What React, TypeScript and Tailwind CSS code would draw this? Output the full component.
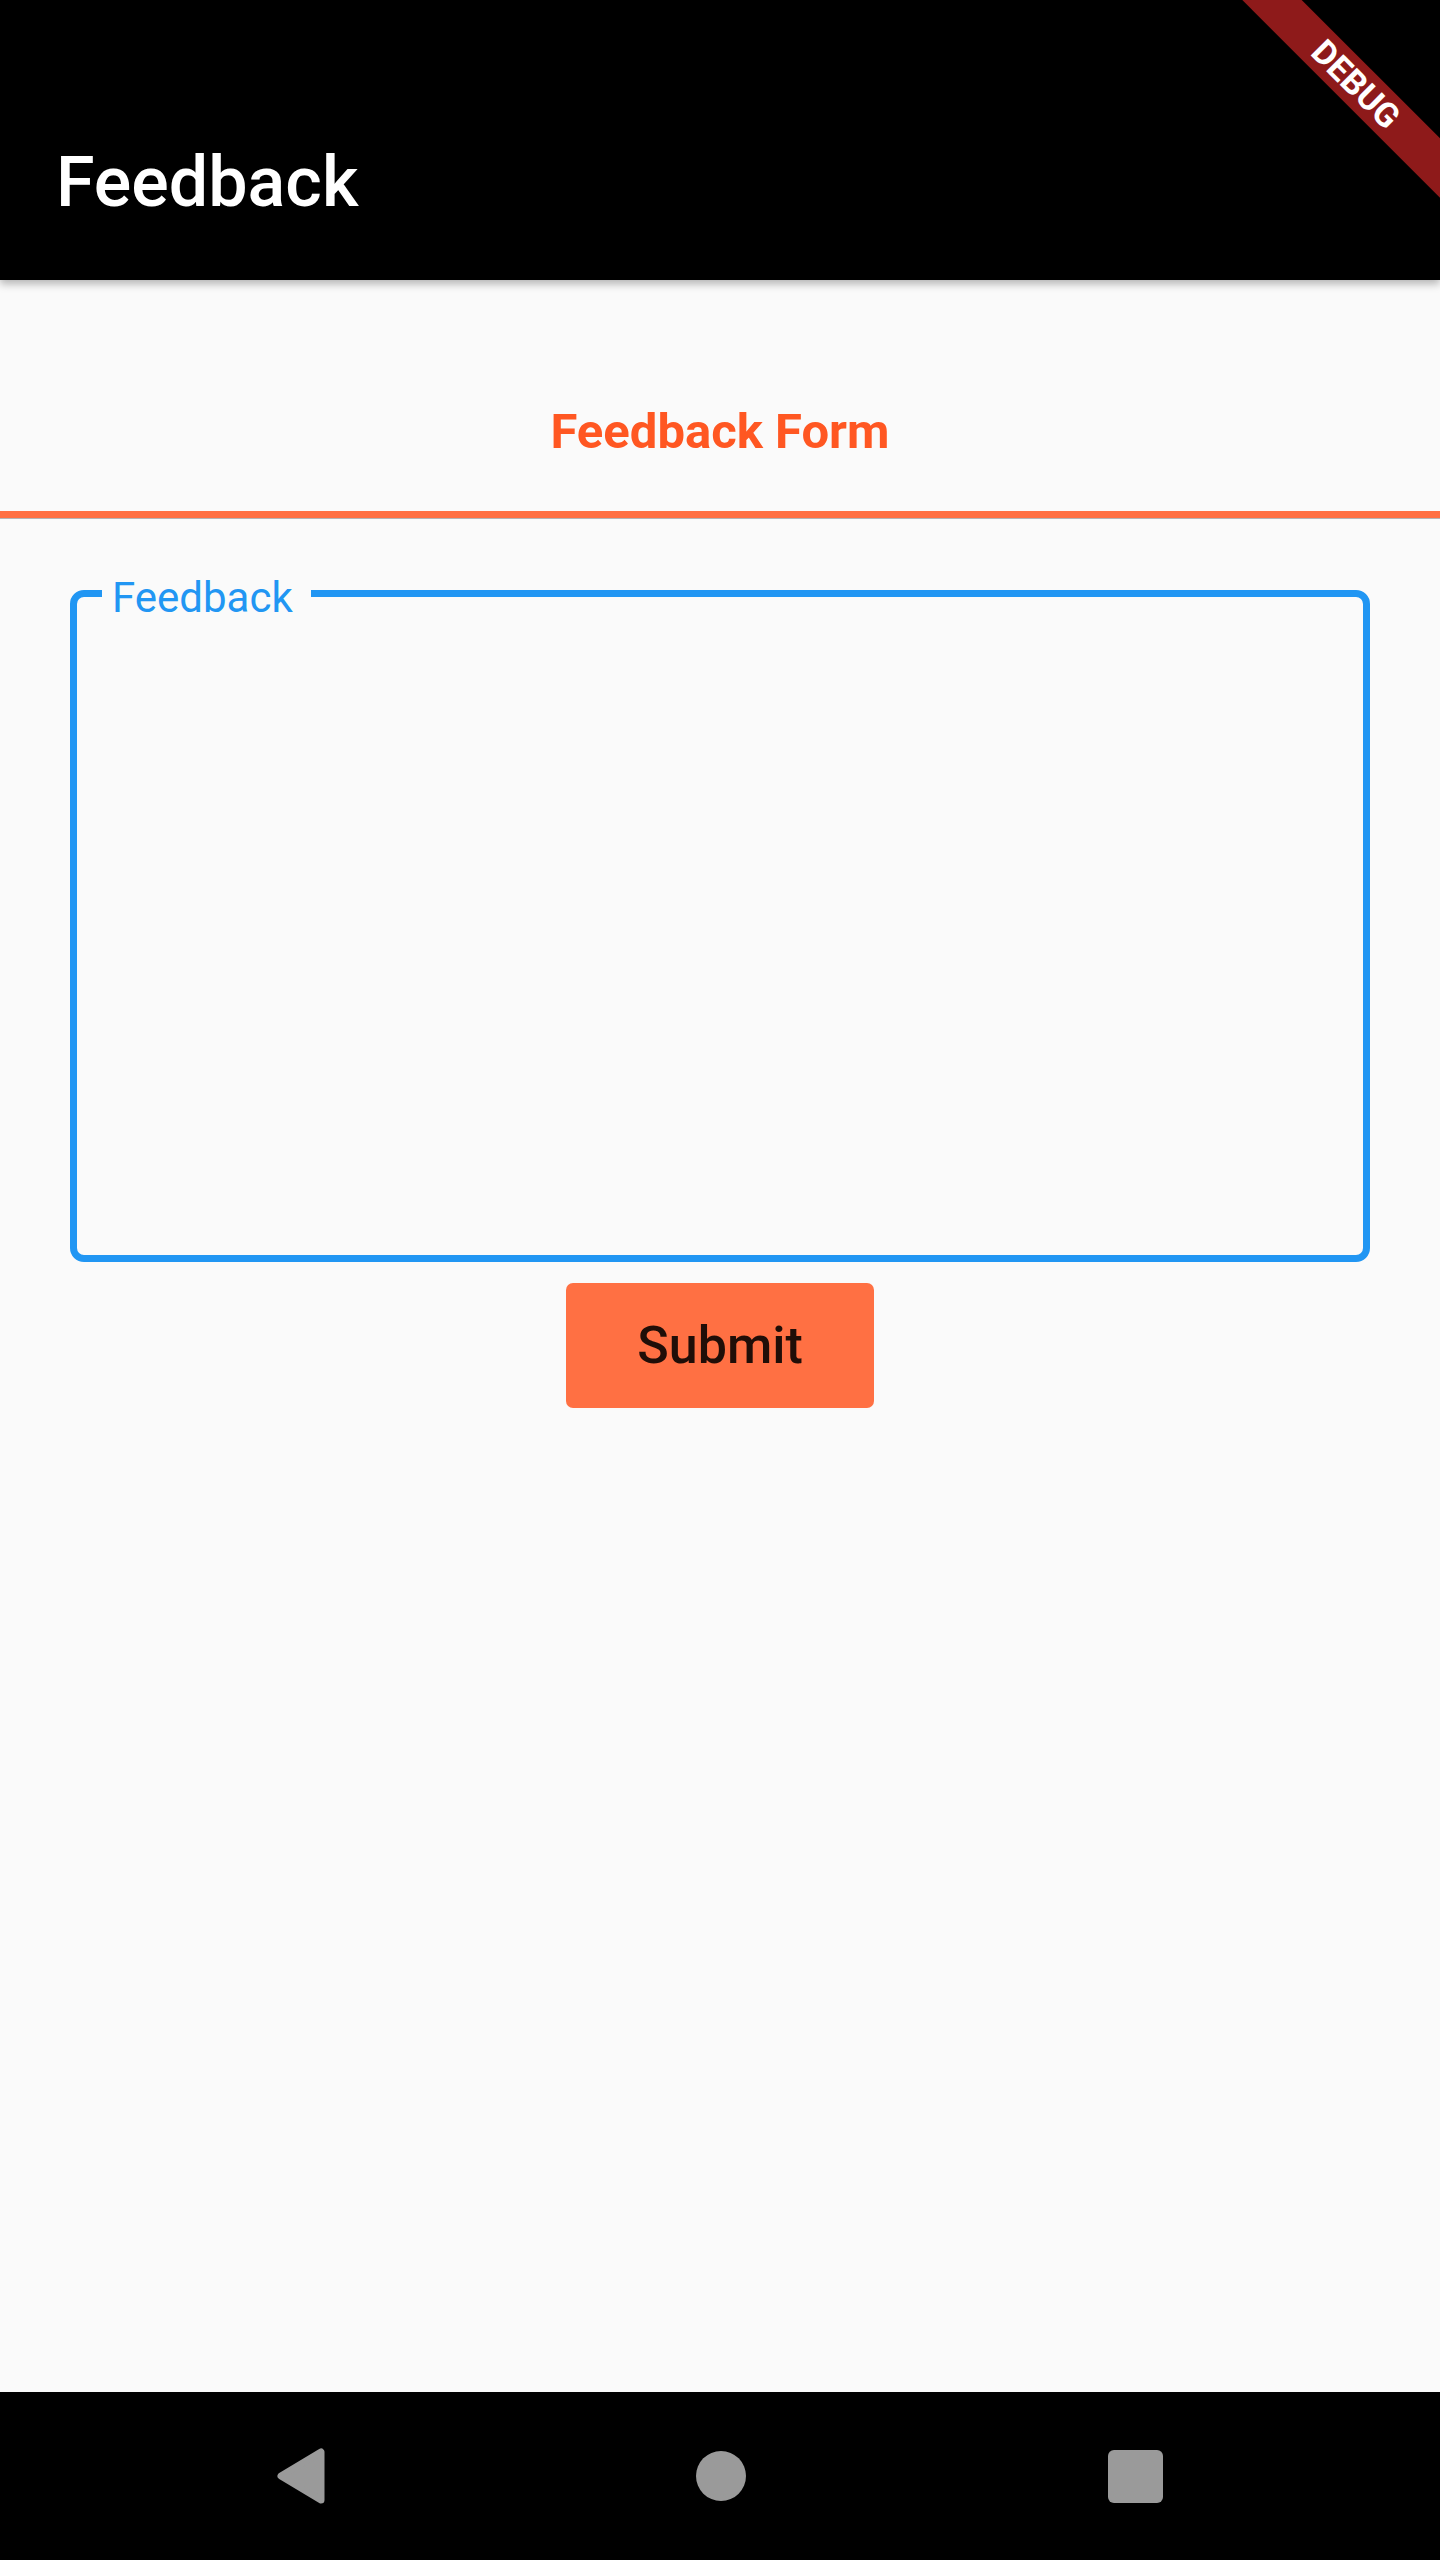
import React from 'react';

function NavBar() {
  return (
    <div className="h-[168px] bg-black flex items-center justify-center">
      {/* Back */}
      <svg width="48" height="56" viewBox="0 0 48 56">
        <polygon
          points="44,4 44,52 4,28"
          fill="#9a9a9a"
          stroke="#9a9a9a"
          strokeWidth="7"
          strokeLinejoin="round"
        />
      </svg>
      {/* Home */}
      <div className="ml-[371px] h-[50px] w-[50px] rounded-full bg-[#9a9a9a]" />
      {/* Recents */}
      <div className="ml-[362px] h-[53px] w-[55px] rounded-[6px] bg-[#9a9a9a]" />
    </div>
  );
}

export default function App() {
  return (
    <div className="relative min-h-[2560px] flex flex-col overflow-hidden bg-[#fafafa] font-['Roboto',sans-serif]">
      {/* App bar */}
      <header className="relative z-10 h-[280px] bg-black pt-[84px] shadow-[0_4px_8px_rgba(0,0,0,0.28)]">
        <div className="h-[196px] flex items-center px-[56px]">
          <h1 className="text-[70px] leading-[70px] font-medium text-white">Feedback</h1>
        </div>
      </header>

      {/* Debug banner */}
      <div className="absolute z-20 left-[1216px] top-[63px] w-[280px] h-[42px] rotate-45 bg-[#8e1a1a] shadow-[0_0_6px_rgba(0,0,0,0.5)] flex items-center justify-center">
        <span className="text-[34px] leading-[34px] font-bold text-white">DEBUG</span>
      </div>

      <main className="flex-1 flex flex-col">
        {/* Tab */}
        <div className="h-[231px] pt-[127px] flex justify-center">
          <span className="text-[49px] leading-[49px] font-bold text-[#ff5722]">Feedback Form</span>
        </div>
        <div className="h-[7px] bg-[#ff7043]" />
        <div className="h-px bg-[#b4b4b4]" />

        {/* Form */}
        <div className="px-[70px] pt-[71px]">
          <div className="relative h-[672px] rounded-[14px] border-[7px] border-[#2196f3]">
            <span className="absolute left-[25px] top-[-20px] bg-[#fafafa] pl-[10px] pr-[18px] text-[42px] leading-[42px] text-[#2196f3]">
              Feedback
            </span>
          </div>
        </div>

        <div className="pt-[21px] flex justify-center">
          <button className="w-[308px] h-[125px] rounded-[7px] bg-[#ff7043] text-[52px] leading-[52px] font-medium text-[#200e08]">
            Submit
          </button>
        </div>
      </main>

      <NavBar />
    </div>
  );
}
